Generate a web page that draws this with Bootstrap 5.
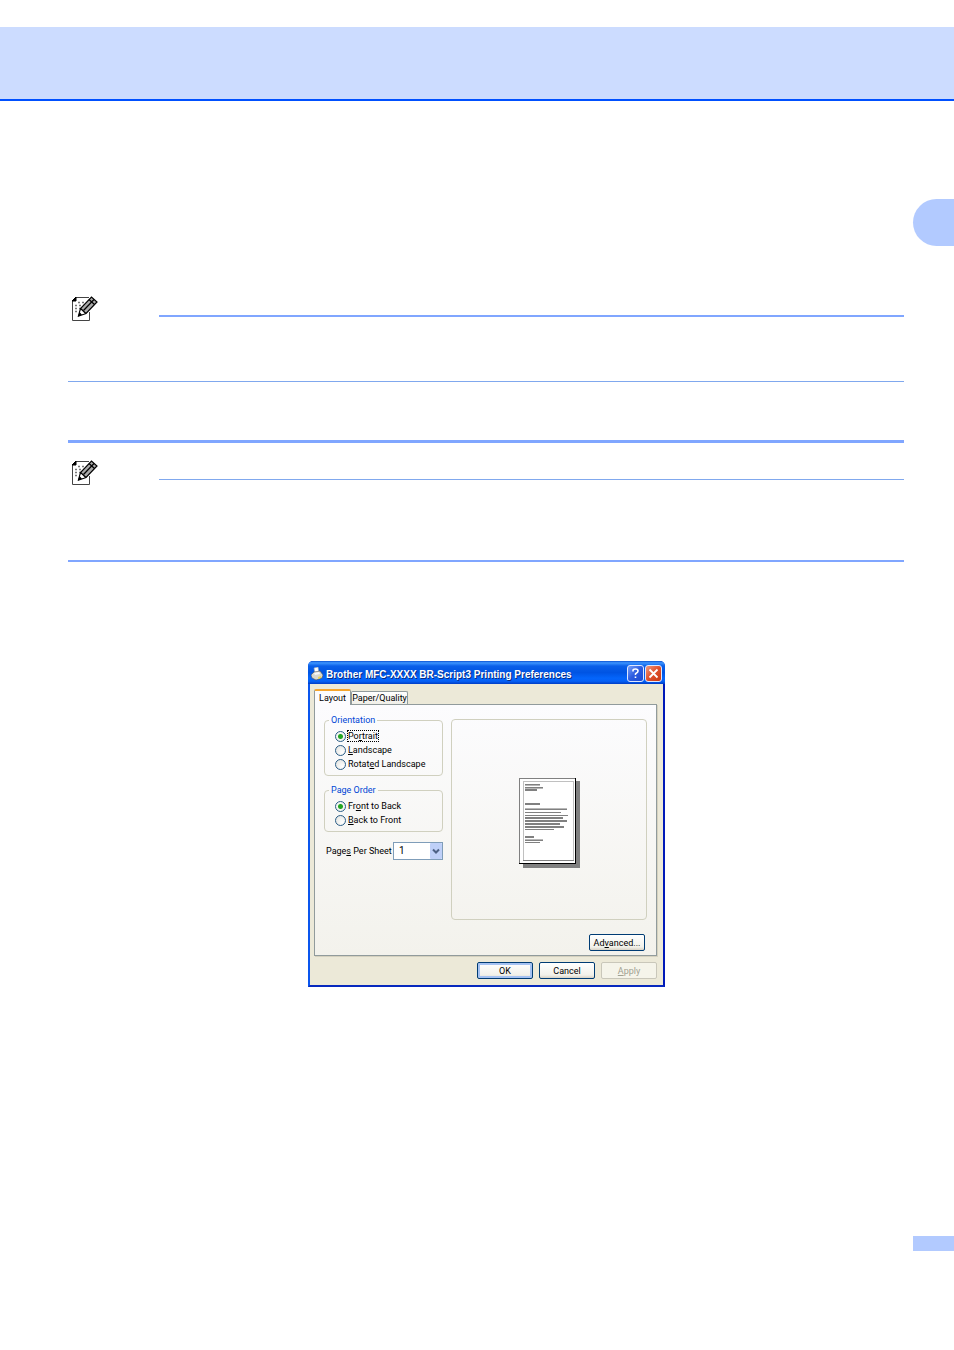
<!DOCTYPE html>
<html lang="en">
<head>
<meta charset="utf-8">
<meta name="viewport" content="width=device-width, initial-scale=1">
<title>Printing Preferences</title>
<link rel="stylesheet" href="https://cdn.jsdelivr.net/npm/bootstrap@5.3.0/dist/css/bootstrap.min.css">
<style>
  body { background: #fff; }
  .page-head { height: 74px; margin-top: 27px; background: #ccdcff; border-bottom: 2px solid #0050ff; }
  .side-tab { width: 41px; height: 47px; margin-top: 98px; background: #b2caff; border-radius: 24px 0 0 24px; }
  .page-mark { width: 41px; height: 15px; margin-top: 249px; background: #b2caff; }
  .page-body { padding-left: 68px; padding-right: 50px; }
  .rule { height: 1px; background: #80a8ee; }
  .rule-mid { height: 2px; background: #80a6ff; }
  .rule-thick { height: 3px; background: #80a6ff; }
  .note { padding-left: 4px; }
  .note-first { margin-top: 50px; }
  .note-second { margin-top: 17px; }
  .note-icon { width: 26px; height: 26px; margin-right: 61px; }
  .note .rule, .note .rule-mid { margin-top: 19px; }
  .gap-a { margin-top: 59px; }
  .gap-b { margin-top: 58px; }
  .gap-c { margin-top: 74px; }

  .figure-area { padding: 99px 49px 0 68px; }
  .xp-window { width: 357px; font-family: Roboto, "Liberation Sans", Arial, sans-serif; font-size: 9px; line-height: 12px; color: #000;
    background: #0a3fd8; border-radius: 5px 5px 0 0; overflow: hidden; }
  .xp-title { height: 23px; padding: 2px 3px 0 3px; color: #fff;
    background: linear-gradient(#0a50d0 0, #3d95ff 8%, #0a5fe8 22%, #0054e3 50%, #0465fb 75%, #0560f5 88%, #003dc4 100%); }
  .xp-title h1 { font-family: "Liberation Sans", Arial, sans-serif; font-size: 10px; line-height: 14px; font-weight: 700; text-shadow: 1px 1px 0 #0a2c80; margin: 2px auto 0 3px; }
  .caps { gap: 1px; }
  .cap { width: 17px; height: 17px; border: 1px solid #dfe8ff; border-radius: 3px; }
  .cap-help { background: linear-gradient(135deg, #7aa2f8, #2c5be0 50%, #1d4bd0); }
  .cap-close { background: linear-gradient(135deg, #f09a80, #e0502c 50%, #c83a12); }
  .xp-frame { border: solid; border-width: 0 2px 2px; border-color: #0a56ee #0019b8 #0728bd #0a56ee; background: #ece9d8; padding: 5px 6px 6px 4px; }
  .xp-tab { border: 1px solid #919b9c; border-bottom: 0; border-radius: 2px 2px 0 0; background: linear-gradient(#fff, #f0efe8); color: #000; line-height: 12px; padding: 0; height: 13px; width: 57px; }
  .xp-tab.active { width: 37px; height: 16px; border-top: 2px solid #f5a52d; background: #fcfcfe; margin-bottom: -1px; position: relative; }
  .xp-panel { border: 1px solid #919b9c; background: linear-gradient(#fcfcfe, #f3f2ec); padding: 9px 9px 4px; box-shadow: 1px 1px 0 #d5d1bf; }
  .left-col { width: 119px; }
  .xp-group { border: 1px solid #d0d0bf; border-radius: 4px; padding: 3px 4px 4px 10px; }
  .xp-group legend { font-size: 9px; line-height: 12px; padding: 0 2px; margin-left: -6px; color: #0046d5; }
  .xp-group + .xp-group { margin-top: 8px; }
  .opt { height: 14px; }
  .opt input { appearance: none; width: 11px; height: 11px; margin: 0 1px 0 0; border: 1px solid #2a5d87; border-radius: 50%; background: radial-gradient(circle at 70% 70%, #fff, #dfe0dc); }
  .opt input:checked { background: radial-gradient(circle, #22a522 0 2px, #f4f6f2 3px); }
  .opt label { padding: 0 1px; }
  .opt .focused { outline: 1px dotted #000; outline-offset: -1px; }
  .sheet-row { margin-top: 10px; padding-left: 2px; }
  .combo { width: 50px; height: 18px; }
  .combo select { appearance: none; width: 100%; height: 100%; border: 1px solid #7f9db9; background: #fff; padding: 0 0 0 5px; font-size: 10px; line-height: 12px; color: #000; }
  .combo svg { top: 1px; right: 1px; pointer-events: none; }
  .preview { border: 1px solid #d0d0bf; border-radius: 4px; margin-top: 5px; height: 201px; padding-top: 58px; }
  .xp-btn { width: 56px; height: 17px; padding: 0; border: 1px solid #003c74; border-radius: 2px; color: #000; line-height: 12px;
    background: linear-gradient(#fff, #f2f1ea 80%, #d8d2c5); }
  .xp-btn.default { box-shadow: inset 0 0 0 2px #a5c2f2; }
  .xp-btn:disabled { border-color: #c9c7ba; background: #f5f4ea; color: #a1a192; }
  .xp-btn.advanced { margin: 14px 2px 0 0; }
  .actions { margin-top: 6px; gap: 6px; }
</style>
</head>
<body>
<svg class="d-none" aria-hidden="true">
  <symbol id="memo" viewBox="0 0 26 26">
    <path d="M4 1H17.500V24.500H.5V5Z" fill="#fff"/>
    <path d="M17.500 16V24.500H.5V5L4 1.500H17" fill="none" stroke="#444"/>
    <path d="M0 5 4 1V5Z" stroke="#000"/>
    <path d="M6 6.500H14M3 9.500H12M3 12.500H10M3 15.500H7" stroke="#777" stroke-width="1.300" stroke-dasharray="2 2"/>
    <path d="M6.500 20 8.500 12.500 19.500 1 25 6 14 17.500Z" fill="#aaa" stroke="#000" stroke-width="1.200"/>
    <path d="M11.500 14.500 22 3.500" stroke="#000" stroke-width="1.200"/>
    <path d="M8.500 12.500 14 17.500M17 3.500 22.500 8.500" stroke="#000" stroke-width="1.200"/>
    <path d="M9 14 12.500 17.500 9 18.500 7.800 17Z" fill="#fff"/>
    <path d="M6 20.500 7.500 16 10 18.700Z" fill="#000"/>
  </symbol>
</svg>

<header class="page-head"></header>
<div class="d-flex justify-content-end"><div class="side-tab"></div></div>

<main>
  <section class="page-body">
    <div class="note note-first d-flex">
      <svg class="note-icon flex-shrink-0" aria-hidden="true"><use href="#memo"/></svg>
      <div class="rule-mid flex-grow-1"></div>
    </div>
    <div class="rule gap-a"></div>
    <div class="rule-thick gap-b"></div>
    <div class="note note-second d-flex">
      <svg class="note-icon flex-shrink-0" aria-hidden="true"><use href="#memo"/></svg>
      <div class="rule flex-grow-1"></div>
    </div>
    <div class="rule-mid gap-c"></div>
  </section>

  <section class="figure-area d-flex justify-content-center">
    <div class="xp-window">
      <div class="xp-title d-flex align-items-center">
        <svg width="12" height="14" viewBox="0 0 12 14" aria-hidden="true">
          <path d="M3 1 7 0 8 6 4 7Z" fill="#fff" stroke="#9aa7b8" stroke-width=".6"/>
          <path d="M0 8 3 5 9 4 12 8 11 11 5 13 1 11Z" fill="#d8d8d0" stroke="#555" stroke-width=".6"/>
          <path d="M3 6 8 5 9 7 4 8Z" fill="#f8f8f8"/>
          <path d="M7 10 10 9V11L7 12Z" fill="#eed654"/>
        </svg>
        <h1 class="text-nowrap">Brother MFC-XXXX BR-Script3 Printing Preferences</h1>
        <div class="caps d-flex">
          <button type="button" class="cap cap-help d-flex p-0" aria-label="Help">
            <svg width="15" height="15" viewBox="0 0 15 15"><path d="M5 5.500V4.500Q5 3 7.500 3T10 5Q10 6.300 8.500 7T7.500 9M7.500 10.500V12" fill="none" stroke="#fff" stroke-width="1.600"/></svg>
          </button>
          <button type="button" class="cap cap-close d-flex p-0" aria-label="Close">
            <svg width="15" height="15" viewBox="0 0 15 15"><path d="M3.500 3.500 11.500 11.500M11.500 3.500 3.500 11.500" stroke="#fff" stroke-width="1.800"/></svg>
          </button>
        </div>
      </div>
      <div class="xp-frame">
        <div class="d-flex align-items-end" role="tablist">
          <button type="button" class="xp-tab active" role="tab" aria-selected="true">Layout</button>
          <button type="button" class="xp-tab text-nowrap" role="tab" aria-selected="false">Paper/Quality</button>
        </div>
        <div class="xp-panel">
          <div class="d-flex gap-2">
            <div class="left-col">
              <fieldset class="xp-group">
                <legend class="float-none w-auto mb-0">Orientation</legend>
                <div class="opt d-flex align-items-center"><input type="radio" name="orient" id="o1" checked><label for="o1" class="focused">Po<u>r</u>trait</label></div>
                <div class="opt d-flex align-items-center"><input type="radio" name="orient" id="o2"><label for="o2"><u>L</u>andscape</label></div>
                <div class="opt d-flex align-items-center"><input type="radio" name="orient" id="o3"><label for="o3" class="text-nowrap">Rotat<u>e</u>d Landscape</label></div>
              </fieldset>
              <fieldset class="xp-group">
                <legend class="float-none w-auto mb-0">Page Order</legend>
                <div class="opt d-flex align-items-center"><input type="radio" name="order" id="p1" checked><label for="p1">Fr<u>o</u>nt to Back</label></div>
                <div class="opt d-flex align-items-center"><input type="radio" name="order" id="p2"><label for="p2"><u>B</u>ack to Front</label></div>
              </fieldset>
              <div class="sheet-row d-flex align-items-center justify-content-between">
                <label for="sheet" class="text-nowrap">Page<u>s</u> Per Sheet</label>
                <div class="combo position-relative flex-shrink-0">
                  <select id="sheet"><option>1</option><option>2</option><option>4</option></select>
                  <svg class="position-absolute" width="12" height="16" viewBox="0 0 12 16" aria-hidden="true"><rect width="12" height="16" rx="1" fill="#bfd0f8"/><path d="M3 6.500 6 9.500 9 6.500" fill="none" stroke="#4d6185" stroke-width="2"/></svg>
                </div>
              </div>
            </div>
            <div class="preview flex-grow-1 d-flex justify-content-center align-items-start">
              <svg width="61" height="90" viewBox="0 0 61 90" shape-rendering="crispEdges" role="img" aria-label="Page preview">
                <rect x="4" y="3" width="57" height="87" fill="#808080"/>
                <rect width="57" height="86" fill="#000"/>
                <path d="M0 0H56V1H1V85H0Z" fill="#808080"/>
                <rect x="1" y="1" width="55" height="84" fill="#fff"/>
                <path d="M4 3H55V83H4Z" fill="#c0c0c0"/><path d="M4 82H55V83H4Z" fill="#808080"/>
                <rect x="5" y="4" width="49" height="78" fill="#fff"/>
                <path d="M6 6h15v2H6zM6 9h18v2H6zM6 11h12v2H6zM6 25h15v2H6zM6 30h42v2H6zM6 34h36v1H6zM6 37h43v1H6zM6 39h38v2H6zM6 42h42v2H6zM6 45h35v2H6zM6 48h39v2H6zM6 51h29v1H6zM6 58h9v2H6zM6 61h18v2H6zM6 64h15v1H6z" fill="#808080"/>
                <path d="M6 7h15v1H6zM6 10h18v1H6zM6 30h42v1H6zM6 61h18v1H6z" fill="#b8b8b8"/>
              </svg>
            </div>
          </div>
          <div class="d-flex justify-content-end"><button type="button" class="xp-btn advanced">Ad<u>v</u>anced...</button></div>
        </div>
        <div class="actions d-flex justify-content-end">
          <button type="button" class="xp-btn default">OK</button>
          <button type="button" class="xp-btn">Cancel</button>
          <button type="button" class="xp-btn" disabled><u>A</u>pply</button>
        </div>
      </div>
    </div>
  </section>
</main>
<footer class="d-flex justify-content-end"><div class="page-mark"></div></footer>
<script src="https://cdn.jsdelivr.net/npm/bootstrap@5.3.0/dist/js/bootstrap.bundle.min.js"></script>
</body>
</html>
